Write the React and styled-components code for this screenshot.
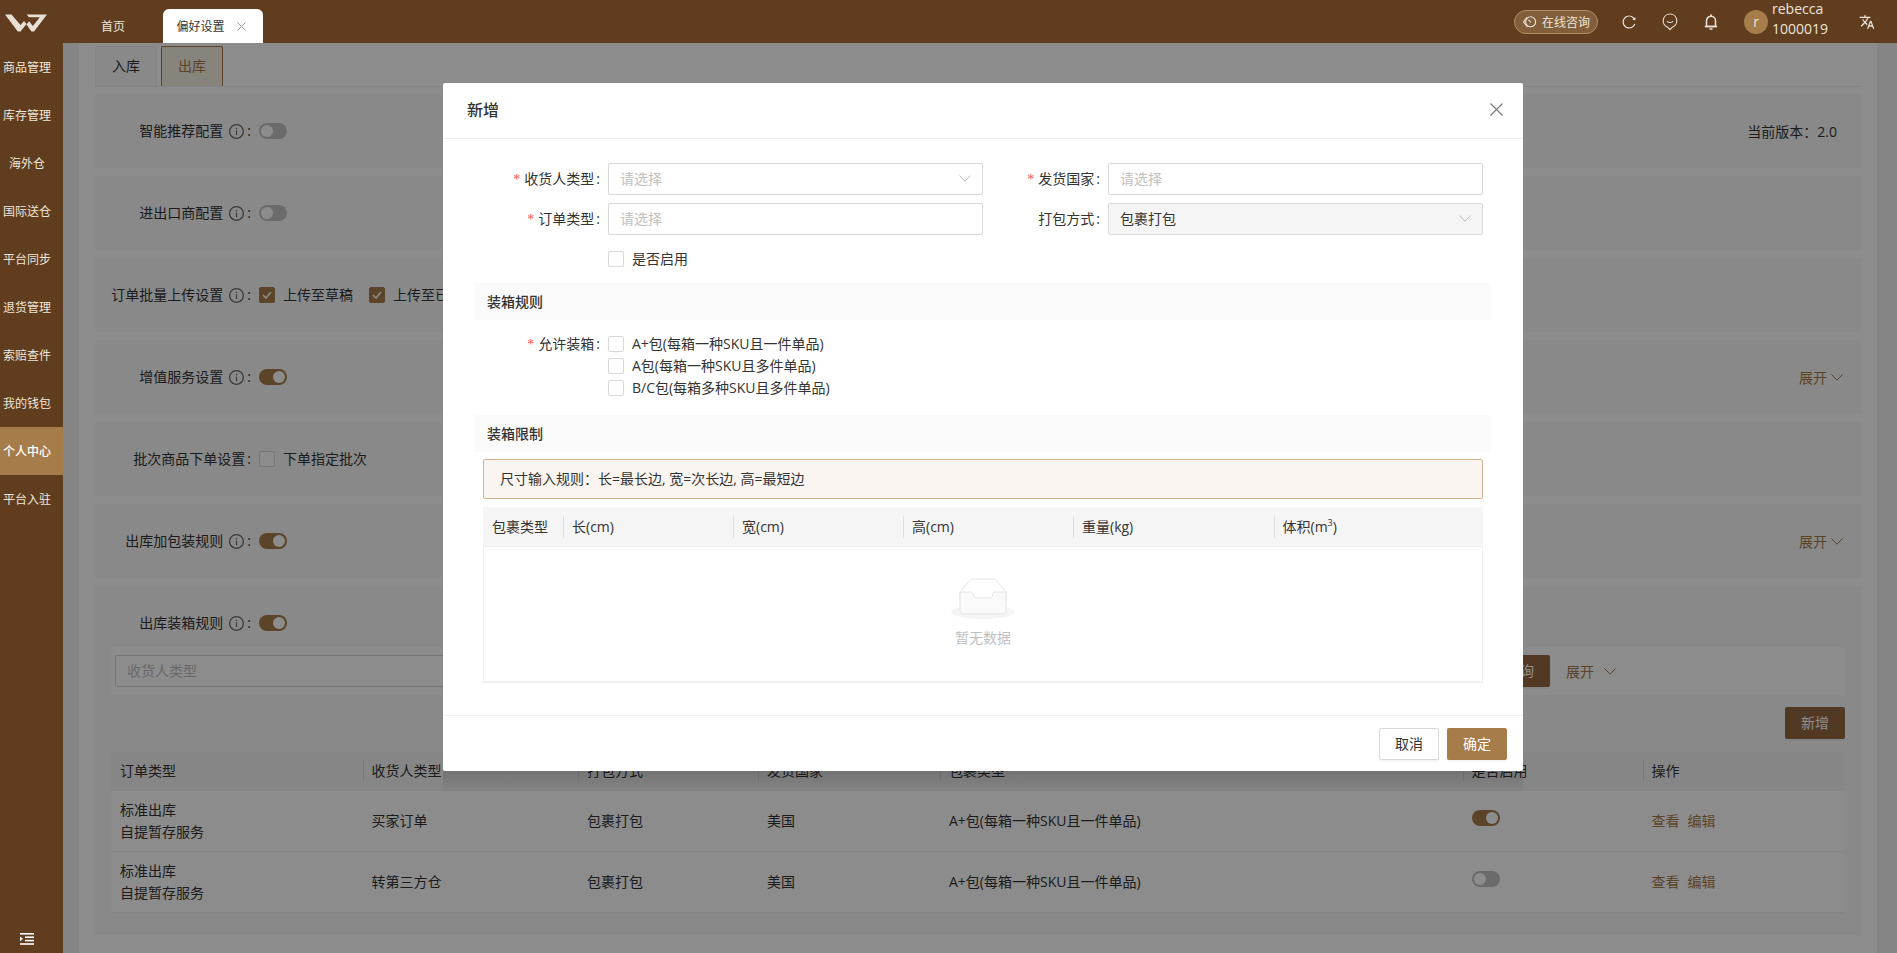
import React from 'react';
import styled, { createGlobalStyle } from 'styled-components';
import { AiOutlineInfoCircle, AiOutlineReload } from 'react-icons/ai';
import { MdTranslate } from 'react-icons/md';

const brown = '#a67c4a';
const pageButton = '#966941';
const headerBrown = '#5f3d1e';

const GlobalStyle = createGlobalStyle`
  html, body { margin: 0; padding: 0; height: 100%; overflow: hidden; }
  body {
    font-family: "Open Sans", "Noto Sans CJK SC", sans-serif;
    font-size: 14px;
    color: #333;
  }
  * { box-sizing: border-box; }
`;

const Shell = styled.div`
  position: relative;
  height: 100vh;
  display: flex;
  flex-direction: column;
  overflow: hidden;
`;

/* top bar */
const Header = styled.header`
  position: relative;
  z-index: 20;
  height: 43px;
  flex: none;
  display: flex;
  align-items: center;
  padding-right: 22px;
  background: ${headerBrown};
  color: #eee5da;
`;
const LogoBox = styled.div`
  width: 63px;
  height: 43px;
  padding-top: 13px;
`;
const PageTab = styled.div`
  align-self: flex-end;
  width: 100px;
  height: 34px;
  display: flex;
  align-items: center;
  justify-content: center;
  gap: 12px;
  padding-right: ${(p) => (p.$active ? '4px' : '0')};
  font-size: 12px;
  border-radius: 6px 6px 0 0;
  background: ${(p) => (p.$active ? '#fff' : 'transparent')};
  color: ${(p) => (p.$active ? '#333' : '#eee5da')};
`;
const HeaderRight = styled.div`
  margin-left: auto;
  display: flex;
  align-items: center;
  gap: 25px;
`;
const ConsultPill = styled.div`
  width: 84px;
  height: 24px;
  margin-right: -2px;
  display: flex;
  align-items: center;
  gap: 4px;
  padding-left: 7px;
  font-size: 12px;
  border-radius: 12px;
  border: 1px solid #b38e65;
  background: #825f3a;
  white-space: nowrap;
`;
const IconSlot = styled.div`
  width: 16px;
  height: 24px;
  display: flex;
  align-items: center;
  justify-content: center;
`;
const User = styled.div`
  width: 90px;
  display: flex;
  align-items: center;
  gap: 4px;
`;
const Avatar = styled.div`
  width: 24px;
  height: 24px;
  border-radius: 50%;
  background: ${brown};
  display: flex;
  align-items: center;
  justify-content: center;
  font-size: 14px;
`;
const UserName = styled.div`
  font-size: 14px;
  line-height: 20px;
  margin-top: -5px;
`;

/* under the top bar */
const Body = styled.div`
  flex: 1;
  min-height: 0;
  display: flex;
`;
const Sidebar = styled.nav`
  position: relative;
  z-index: 20;
  width: 63px;
  flex: none;
  display: flex;
  flex-direction: column;
  background: ${headerBrown};
`;
const SideItem = styled.div`
  height: 48px;
  flex: none;
  padding-right: 9px;
  display: flex;
  align-items: center;
  justify-content: center;
  font-size: 12px;
  white-space: nowrap;
  color: ${(p) => (p.$active ? '#fff' : '#eee5da')};
  font-weight: ${(p) => (p.$active ? 500 : 400)};
  background: ${(p) => (p.$active ? brown : 'transparent')};
`;
const Collapse = styled.div`
  margin-top: auto;
  height: 33px;
  padding: 13px 9px 0 0;
  display: flex;
  justify-content: center;
`;

const Main = styled.main`
  flex: 1;
  min-width: 0;
  padding: 0 20px 0 16px;
  background: #f3f3f3;
`;
const Panel = styled.div`
  height: 100%;
  padding: 3px 16px 0;
  background: #fff;
`;
const TabBar = styled.div`
  display: flex;
  gap: 4px;
  border-bottom: 1px solid #f0f0f0;
  height: 41px;
`;
const TypeTab = styled.div`
  width: 62px;
  height: 40px;
  padding-bottom: 4px;
  display: flex;
  align-items: center;
  justify-content: center;
  border: 1px solid ${(p) => (p.$active ? brown : '#f0f0f0')};
  border-bottom: none;
  border-radius: 2px 2px 0 0;
  background: ${(p) => (p.$active ? '#f6eee4' : '#fafafa')};
  color: ${(p) => (p.$active ? brown : '#333')};
`;
const CardList = styled.div`
  display: flex;
  flex-direction: column;
  gap: 8px;
  margin-top: 7px;
`;
const Card = styled.section`
  min-height: 74px;
  height: ${(p) => (p.$tall ? '349px' : '74px')};
  padding-top: 25px;
  background: #fafafa;
`;
const SettingRow = styled.div`
  height: 24px;
  display: flex;
  align-items: center;
`;
const SettingLabel = styled.div`
  width: 164px;
  padding-right: 8px;
  display: flex;
  align-items: center;
  justify-content: flex-end;
  gap: 5px;
  white-space: nowrap;
  line-height: 20px;
  flex: none;
`;
const Colon = styled.span`
  margin-left: -3px;
`;
const SwitchTrack = styled.span`
  width: 28px;
  height: 16px;
  border-radius: 8px;
  padding: 2px;
  display: flex;
  justify-content: ${(p) => (p.$on ? 'flex-end' : 'flex-start')};
  background: ${(p) => (p.$on ? brown : '#c4c4c4')};
  flex: none;
`;
const SwitchThumb = styled.span`
  width: 12px;
  height: 12px;
  border-radius: 50%;
  background: #fff;
`;
const BoxLabel = styled.label`
  display: inline-flex;
  align-items: center;
  gap: 8px;
  margin-right: ${(p) => p.$gap || 0}px;
  white-space: nowrap;
  line-height: 22px;
`;
const Box = styled.span`
  width: 16px;
  height: 16px;
  flex: none;
  border-radius: 2px;
  border: 1px solid ${(p) => (p.$checked ? brown : '#d9d9d9')};
  background: ${(p) => (p.$checked ? brown : '#fff')};
  display: flex;
  align-items: center;
  justify-content: center;
`;
const RowRight = styled.div`
  margin-left: auto;
  padding-right: ${(p) => p.$pad}px;
  display: flex;
  align-items: center;
  gap: 4px;
  color: ${(p) => (p.$link ? brown : '#333')};
`;
const SearchBar = styled.div`
  height: 48px;
  margin: 12px 16px 0;
  padding: 8px 229px 8px 4px;
  display: flex;
  align-items: center;
  background: #fff;
`;
const SearchInput = styled.div`
  width: 400px;
  height: 32px;
  padding: 0 0 2px 11px;
  border: 1px solid #d9d9d9;
  border-radius: 2px;
  background: #fff;
  color: #bfbfbf;
  display: flex;
  align-items: center;
`;
const SearchTail = styled.div`
  margin-left: auto;
  display: flex;
  align-items: center;
  gap: 16px;
`;
const ExpandLink = styled.div`
  display: flex;
  align-items: center;
  gap: 10px;
  color: ${brown};
`;
const PrimaryButton = styled.button`
  width: 60px;
  height: 32px;
  padding: 0 0 2px;
  border: none;
  border-radius: 2px;
  background: ${(p) => (p.$page ? pageButton : brown)};
  color: #fff;
  font: inherit;
  box-shadow: 0 2px 0 rgba(0, 0, 0, 0.04);
`;
const GhostButton = styled(PrimaryButton)`
  background: #fff;
  color: #333;
  border: 1px solid #d9d9d9;
`;
const AddRow = styled.div`
  display: flex;
  justify-content: flex-end;
  margin: 12px 16px 13px;
`;
const ListTable = styled.div`
  margin: 0 17px 0 16px;
  box-shadow: 0 1px 0 #f0f0f0;
`;
const ListRow = styled.div`
  display: grid;
  grid-template-columns: 251.5px 215.5px 180px 182px 522.5px 180px 1fr;
  align-items: center;
  height: ${(p) => (p.$head ? '39px' : '61px')};
  background: ${(p) => (p.$head ? '#f5f5f5' : '#fff')};
  border-bottom: 1px solid #f0f0f0;
`;
const ListCell = styled.div`
  position: relative;
  padding-left: 9px;
  line-height: 22px;
  white-space: nowrap;
  ${(p) =>
    p.$head &&
    `
    &:not(:first-child)::before {
      content: '';
      position: absolute;
      left: 0;
      top: 0;
      height: 22px;
      width: 1px;
      background: #e0e0e0;
    }
  `}
`;
const SwitchCell = styled(ListCell)`
  padding-bottom: 6px;
`;
const CellLink = styled.a`
  color: ${brown};
  margin-right: 8px;
`;

/* dialog */
const Overlay = styled.div`
  position: absolute;
  z-index: 10;
  top: 43px;
  left: 63px;
  right: 0;
  bottom: 0;
  background: rgba(0, 0, 0, 0.45);
`;
const Modal = styled.div`
  position: absolute;
  z-index: 11;
  top: 83px;
  left: 443px;
  width: 1080px;
  height: 688px;
  background: #fff;
  border-radius: 2px;
  display: flex;
  flex-direction: column;
  &::after {
    content: '';
    position: absolute;
    top: 100%;
    left: 0;
    right: 0;
    height: 22px;
    background: linear-gradient(rgba(0, 0, 0, 0.14), rgba(0, 0, 0, 0));
  }
`;
const ModalHead = styled.div`
  height: 56px;
  flex: none;
  padding: 0 20px 3px 24px;
  display: flex;
  align-items: center;
  justify-content: space-between;
  border-bottom: 1px solid #f0f0f0;
  font-size: 16px;
  font-weight: 500;
`;
const ModalBody = styled.div`
  flex: 1;
  padding: 24px 32px 0;
`;
const FormGrid = styled.div`
  padding: 0 8px;
  display: grid;
  grid-template-columns: 500px 500px;
  row-gap: 8px;
`;
const Field = styled.div`
  display: flex;
  align-items: center;
  min-height: 32px;
`;
const FieldLabel = styled.div`
  width: 125px;
  flex: none;
  padding-right: 8px;
  text-align: right;
  white-space: nowrap;
  line-height: 22px;
  &::after {
    content: ':';
    margin-left: 2px;
  }
`;
const LabelSpacer = styled.div`
  width: 125px;
  flex: none;
`;
const Star = styled.span`
  color: #ff4d4f;
  margin-right: 4px;
  font-family: "Liberation Serif", serif;
`;
const SelectBox = styled.div`
  width: 375px;
  height: 32px;
  padding: 0 11px 2px;
  display: flex;
  align-items: center;
  justify-content: space-between;
  border: 1px solid #d9d9d9;
  border-radius: 2px;
  background: ${(p) => (p.$disabled ? '#f5f5f5' : '#fff')};
  color: ${(p) => (p.$value ? '#333' : '#bfbfbf')};
`;
const SectionBar = styled.div`
  height: 37px;
  padding: 0 0 2px 12px;
  display: flex;
  align-items: center;
  font-weight: 500;
  background: #fafafa;
  margin-top: ${(p) => p.$mt || 0}px;
`;
const RuleField = styled.div`
  display: flex;
  padding: 13px 8px 0;
`;
const RuleOptions = styled.div`
  display: flex;
  flex-direction: column;
`;
const Alert = styled.div`
  height: 40px;
  margin: 7px 8px 8px;
  padding: 0 0 2px 16px;
  display: flex;
  align-items: center;
  background: #faf5f0;
  border: 1px solid #d4b48f;
  border-radius: 2px;
`;
const SizeTable = styled.div`
  margin: 0 8px;
  height: 176px;
  display: flex;
  flex-direction: column;
  border: 1px solid #f0f0f0;
  border-top: none;
  border-bottom-width: 2px;
`;
const SizeHead = styled.div`
  height: 40px;
  flex: none;
  margin: 0 -1px;
  display: grid;
  grid-template-columns: 80px 170px 170px 170px 200.5px 1fr;
  align-items: center;
  background: #f5f5f5;
  border-bottom: 1px solid #f0f0f0;
`;
const Empty = styled.div`
  flex: 1;
  display: flex;
  flex-direction: column;
  align-items: center;
  padding-top: 31px;
  gap: 8px;
  color: #bfbfbf;
  line-height: 22px;
`;
const ModalFoot = styled.div`
  height: 56px;
  flex: none;
  padding: 0 16px;
  display: flex;
  align-items: center;
  justify-content: flex-end;
  gap: 8px;
  border-top: 1px solid #f0f0f0;
`;
const CubeMark = styled.sup`
  font-size: 9px;
  line-height: 0;
`;

const Chevron = ({ size = 12, color = '#bfbfbf', width = 1 }) => (
  <svg width={size} height={size} viewBox="0 0 12 12" fill="none">
    <path d="M.5 3.500 6 9.200l5.500-5.700" stroke={color} strokeWidth={width} />
  </svg>
);

const Logo = () => (
  <svg width="52" height="20" viewBox="0 0 52 20" fill="#e9e0d5">
    <path d="M5 1.500h6.500l9 10.500 3.500-4 2.500 3-6 7.500h-2.700z" />
    <path d="M26.500 1.500H47L34 18.500h-2.600l-5-7 2.700-3.200 3.800 4.700 6.900-8.800H29z" />
  </svg>
);

const HeadsetIcon = () => (
  <svg width="16" height="16" viewBox="0 0 16 16" fill="none" stroke="#eee5da" strokeWidth="1.100">
    <path d="M5 3.200 1.500 8 5.500 13" />
    <circle cx="8.600" cy="7.800" r="5" />
    <path d="M6.500 5.800 9 8.300" />
  </svg>
);

const SmileIcon = () => (
  <svg width="16" height="18" viewBox="0 0 16 18" fill="none" stroke="#eee5da" strokeWidth="1.100">
    <path d="M8 1a6.800 6.800 0 0 1 2.300 13.200L8 16.600l-2.300-2.400A6.800 6.800 0 0 1 8 1z" />
    <path d="M5 8.200c.6 1.800 5.400 1.800 6 0" />
  </svg>
);

const BellIcon = () => (
  <svg width="16" height="18" viewBox="0 0 16 18" fill="none" stroke="#eee5da" strokeWidth="1.500">
    <path d="M3.500 13.500V7.800a4.500 4.500 0 0 1 9 0v5.700z" />
    <path d="M1.800 13.500h12.400M6.500 16h3M8 1.300v2" />
  </svg>
);

const IndentIcon = () => (
  <svg width="14" height="12" viewBox="0 0 14 12" fill="#fff">
    <rect x="0" y="0" width="14" height="1.600" />
    <rect x="5" y="3.400" width="9" height="1.600" />
    <rect x="5" y="6.800" width="9" height="1.600" />
    <rect x="0" y="10.200" width="14" height="1.600" />
    <path d="M0 3.400 3 5.800 0 8.200z" />
  </svg>
);

const Check = () => (
  <svg width="10" height="8" viewBox="0 0 10 8" fill="none">
    <path d="M1 4l3 3 5-6" stroke="#fff" strokeWidth="1.600" />
  </svg>
);

const EmptyIcon = () => (
  <svg width="64" height="41" viewBox="0 0 64 41">
    <g transform="translate(0 1)" fill="none" fillRule="evenodd">
      <ellipse fill="#f5f5f5" cx="32" cy="33" rx="32" ry="7" />
      <g fillRule="nonzero" stroke="#e4e4e4">
        <path d="M55 12.760L44.854 1.258C44.367.474 43.656 0 42.907 0H21.093c-.749 0-1.460.474-1.947 1.257L9 12.761V22h46v-9.240z" />
        <path
          d="M41.613 15.931c0-1.605.994-2.930 2.227-2.931H55v18.137C55 33.260 53.680 35 52.050 35h-40.100C10.320 35 9 33.259 9 31.137V13h11.160c1.233 0 2.227 1.323 2.227 2.928v.022c0 1.605 1.005 2.901 2.237 2.901h14.752c1.232 0 2.237-1.308 2.237-2.913v-.007z"
          fill="#fafafa"
        />
      </g>
    </g>
  </svg>
);

const Switch = ({ on }) => (
  <SwitchTrack $on={on}>
    <SwitchThumb />
  </SwitchTrack>
);

const Info = () => <AiOutlineInfoCircle size={17} color="#666" />;

const Label = ({ text, info = true }) => (
  <SettingLabel>
    <span>{text}</span>
    {info && <Info />}
    <Colon>:</Colon>
  </SettingLabel>
);

const Expand = () => (
  <RowRight $pad={18} $link>
    展开
    <Chevron color={brown} />
  </RowRight>
);

const menu = ['商品管理', '库存管理', '海外仓', '国际送仓', '平台同步', '退货管理', '索赔查件', '我的钱包', '个人中心', '平台入驻'];
const listColumns = ['订单类型', '收货人类型', '打包方式', '发货国家', '包裹类型', '是否启用', '操作'];
const listRows = [
  { receiver: '买家订单', on: true },
  { receiver: '转第三方仓', on: false },
];
const sizeColumns = ['包裹类型', '长(cm)', '宽(cm)', '高(cm)', '重量(kg)'];
const packOptions = ['A+包(每箱一种SKU且一件单品)', 'A包(每箱一种SKU且多件单品)', 'B/C包(每箱多种SKU且多件单品)'];

export default function App() {
  return (
    <Shell>
      <GlobalStyle />
      <Header>
        <LogoBox>
          <Logo />
        </LogoBox>
        <PageTab>首页</PageTab>
        <PageTab $active>
          <span>偏好设置</span>
          <svg width="9" height="9" viewBox="0 0 9 9" stroke="#999" fill="none">
            <path d="M.5.500l8 8M8.500.500l-8 8" />
          </svg>
        </PageTab>
        <HeaderRight>
          <ConsultPill>
            <HeadsetIcon />
            在线咨询
          </ConsultPill>
          <IconSlot>
            <AiOutlineReload size={20} />
          </IconSlot>
          <IconSlot>
            <SmileIcon />
          </IconSlot>
          <IconSlot>
            <BellIcon />
          </IconSlot>
          <User>
            <Avatar>r</Avatar>
            <UserName>
              rebecca
              <br />
              1000019
            </UserName>
          </User>
          <IconSlot>
            <MdTranslate size={20} />
          </IconSlot>
        </HeaderRight>
      </Header>

      <Body>
        <Sidebar>
          {menu.map((item) => (
            <SideItem key={item} $active={item === '个人中心'}>
              {item}
            </SideItem>
          ))}
          <Collapse>
            <IndentIcon />
          </Collapse>
        </Sidebar>

        <Main>
          <Panel>
            <TabBar>
              <TypeTab>入库</TypeTab>
              <TypeTab $active>出库</TypeTab>
            </TabBar>
            <CardList>
              <Card>
                <SettingRow>
                  <Label text="智能推荐配置" />
                  <Switch />
                  <RowRight $pad={24}>当前版本：2.0</RowRight>
                </SettingRow>
              </Card>
              <Card>
                <SettingRow>
                  <Label text="进出口商配置" />
                  <Switch />
                </SettingRow>
              </Card>
              <Card>
                <SettingRow>
                  <Label text="订单批量上传设置" />
                  <BoxLabel $gap={16}>
                    <Box $checked>
                      <Check />
                    </Box>
                    上传至草稿
                  </BoxLabel>
                  <BoxLabel>
                    <Box $checked>
                      <Check />
                    </Box>
                    上传至已发布
                  </BoxLabel>
                </SettingRow>
              </Card>
              <Card>
                <SettingRow>
                  <Label text="增值服务设置" />
                  <Switch on />
                  <Expand />
                </SettingRow>
              </Card>
              <Card>
                <SettingRow>
                  <Label text="批次商品下单设置" info={false} />
                  <BoxLabel>
                    <Box />
                    下单指定批次
                  </BoxLabel>
                </SettingRow>
              </Card>
              <Card>
                <SettingRow>
                  <Label text="出库加包装规则" />
                  <Switch on />
                  <Expand />
                </SettingRow>
              </Card>
              <Card $tall>
                <SettingRow>
                  <Label text="出库装箱规则" />
                  <Switch on />
                </SettingRow>
                <SearchBar>
                  <SearchInput>收货人类型</SearchInput>
                  <SearchTail>
                    <PrimaryButton $page>查询</PrimaryButton>
                    <ExpandLink>
                      展开
                      <Chevron color={brown} />
                    </ExpandLink>
                  </SearchTail>
                </SearchBar>
                <AddRow>
                  <PrimaryButton $page>新增</PrimaryButton>
                </AddRow>
                <ListTable>
                  <ListRow $head>
                    {listColumns.map((col) => (
                      <ListCell key={col} $head>
                        {col}
                      </ListCell>
                    ))}
                  </ListRow>
                  {listRows.map((row) => (
                    <ListRow key={row.receiver}>
                      <ListCell>
                        标准出库
                        <br />
                        自提暂存服务
                      </ListCell>
                      <ListCell>{row.receiver}</ListCell>
                      <ListCell>包裹打包</ListCell>
                      <ListCell>美国</ListCell>
                      <ListCell>A+包(每箱一种SKU且一件单品)</ListCell>
                      <SwitchCell>
                        <Switch on={row.on} />
                      </SwitchCell>
                      <ListCell>
                        <CellLink>查看</CellLink>
                        <CellLink>编辑</CellLink>
                      </ListCell>
                    </ListRow>
                  ))}
                </ListTable>
              </Card>
            </CardList>
          </Panel>
        </Main>
      </Body>

      <Overlay />
      <Modal>
        <ModalHead>
          新增
          <svg width="13" height="13" viewBox="0 0 13 13" stroke="#777" fill="none" strokeWidth="1.100">
            <path d="M.5.500l12 12M12.500.500l-12 12" />
          </svg>
        </ModalHead>
        <ModalBody>
          <FormGrid>
            <Field>
              <FieldLabel>
                <Star>*</Star>收货人类型
              </FieldLabel>
              <SelectBox>
                请选择
                <Chevron />
              </SelectBox>
            </Field>
            <Field>
              <FieldLabel>
                <Star>*</Star>发货国家
              </FieldLabel>
              <SelectBox>请选择</SelectBox>
            </Field>
            <Field>
              <FieldLabel>
                <Star>*</Star>订单类型
              </FieldLabel>
              <SelectBox>请选择</SelectBox>
            </Field>
            <Field>
              <FieldLabel>打包方式</FieldLabel>
              <SelectBox $value $disabled>
                包裹打包
                <Chevron />
              </SelectBox>
            </Field>
            <Field>
              <LabelSpacer />
              <BoxLabel>
                <Box />
                是否启用
              </BoxLabel>
            </Field>
          </FormGrid>

          <SectionBar $mt={8}>装箱规则</SectionBar>
          <RuleField>
            <FieldLabel>
              <Star>*</Star>允许装箱
            </FieldLabel>
            <RuleOptions>
              {packOptions.map((opt) => (
                <BoxLabel key={opt}>
                  <Box />
                  {opt}
                </BoxLabel>
              ))}
            </RuleOptions>
          </RuleField>

          <SectionBar $mt={16}>装箱限制</SectionBar>
          <Alert>尺寸输入规则：长=最长边, 宽=次长边, 高=最短边</Alert>
          <SizeTable>
            <SizeHead>
              {sizeColumns.map((col) => (
                <ListCell key={col} $head>
                  {col}
                </ListCell>
              ))}
              <ListCell $head>
                体积(m<CubeMark>3</CubeMark>)
              </ListCell>
            </SizeHead>
            <Empty>
              <EmptyIcon />
              暂无数据
            </Empty>
          </SizeTable>
        </ModalBody>
        <ModalFoot>
          <GhostButton>取消</GhostButton>
          <PrimaryButton>确定</PrimaryButton>
        </ModalFoot>
      </Modal>
    </Shell>
  );
}
